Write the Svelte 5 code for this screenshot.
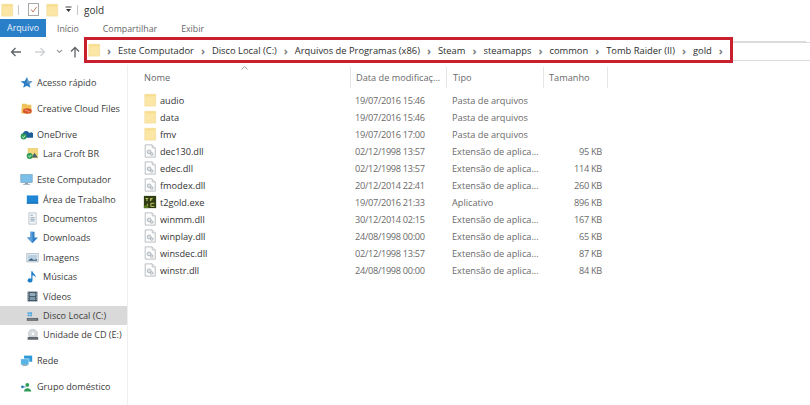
<script>
  const crumbs = ['Este Computador','Disco Local (C:)','Arquivos de Programas (x86)','Steam','steamapps','common','Tomb Raider (II)','gold'];
  const EXT = 'Extensão de aplica...';
  const files = [
    {n:'audio',d:'19/07/2016 15:46',t:'Pasta de arquivos',s:'',i:'folder'},
    {n:'data',d:'19/07/2016 15:46',t:'Pasta de arquivos',s:'',i:'folder'},
    {n:'fmv',d:'19/07/2016 17:00',t:'Pasta de arquivos',s:'',i:'folder'},
    {n:'dec130.dll',d:'02/12/1998 13:57',t:EXT,s:'95 KB',i:'dll'},
    {n:'edec.dll',d:'02/12/1998 13:57',t:EXT,s:'114 KB',i:'dll'},
    {n:'fmodex.dll',d:'20/12/2014 22:41',t:EXT,s:'260 KB',i:'dll'},
    {n:'t2gold.exe',d:'19/07/2016 21:33',t:'Aplicativo',s:'896 KB',i:'exe'},
    {n:'winmm.dll',d:'30/12/2014 02:15',t:EXT,s:'167 KB',i:'dll'},
    {n:'winplay.dll',d:'24/08/1998 00:00',t:EXT,s:'65 KB',i:'dll'},
    {n:'winsdec.dll',d:'02/12/1998 13:57',t:EXT,s:'87 KB',i:'dll'},
    {n:'winstr.dll',d:'24/08/1998 00:00',t:EXT,s:'84 KB',i:'dll'},
  ];
  const nav = [
    {g:'g1',items:[{l:'Acesso rápido',i:'star'}]},
    {g:'g2',items:[{l:'Creative Cloud Files',i:'cc'}]},
    {g:'g2',items:[{l:'OneDrive',i:'cloud'},{l:'Lara Croft BR',i:'lara',sub:1}]},
    {g:'g3',items:[{l:'Este Computador',i:'pc'},{l:'Área de Trabalho',i:'desk',sub:1},{l:'Documentos',i:'doc',sub:1},{l:'Downloads',i:'down',sub:1},{l:'Imagens',i:'img',sub:1},{l:'Músicas',i:'music',sub:1},{l:'Vídeos',i:'video',sub:1},{l:'Disco Local (C:)',i:'disk',sub:1,sel:1},{l:'Unidade de CD (E:)',i:'cd',sub:1}]},
    {g:'g3',items:[{l:'Rede',i:'net'}]},
    {g:'g4',items:[{l:'Grupo doméstico',i:'home'}]},
  ];
</script>

{#snippet icon(k, size = 16)}
  <svg class="ic" width={size} height={size} viewBox="0 0 16 16" aria-hidden="true">
    {#if k === 'folder'}
      <path d="M2 1.500h12.500V15H2z" fill="#fbe6a6" stroke="#f0d98f" stroke-width=".6"/>
      <rect x="2.400" y="1.800" width="11.600" height="2" fill="#f8dd8c"/>
    {:else if k === 'dll'}
      <path d="M2.500 1h8l3.500 3.500V15H2.500z" fill="#fdfdfd" stroke="#a9aeb4" stroke-width=".9"/>
      <path d="M10.500 1v3.500H14" fill="#e8ecef" stroke="#a9aeb4" stroke-width=".7"/>
      <circle cx="7" cy="9" r="2.200" fill="#dfe4e8" stroke="#98a2a8" stroke-width=".8"/>
      <circle cx="10" cy="11.500" r="1.600" fill="#dfe4e8" stroke="#98a2a8" stroke-width=".7"/>
    {:else if k === 'exe'}
      <rect x="1" y="1" width="14" height="14" fill="#2f3d12"/>
      <path d="M3 4h3M4.500 4v3M8.500 7V4H11M8.500 5.500h2M9 9.500h4M9 9.500V13h4M5 10v3" stroke="#c9c56a" stroke-width="1.100" fill="none"/>
      <rect x="1" y="12" width="5" height="3" fill="#5d7a22"/>
    {:else if k === 'star'}
      <path d="M8.500 1.500l2 4.600 4.800.4-3.700 3.200 1.200 4.800-4.300-2.600-4.600 2.600 1.200-4.800L.8 6.500l5-.4z" fill="#2c7fc4"/>
      <path d="M8.500 1.500l2 4.600 4.800.4-3.700 3.200-3.100-1.500z" fill="#6b9fc9"/>
    {:else if k === 'cc'}
      <path d="M2.500 2h5L9 3.500h5V14H1.500z" fill="#f0c25a"/>
      <ellipse cx="9" cy="11" rx="5.500" ry="3.400" fill="#d9542b"/>
      <path d="M6 11a1.600 1.600 0 0 1 3 0 1.600 1.600 0 0 0 3 0" stroke="#f4c9b0" stroke-width=".8" fill="none"/>
    {:else if k === 'cloud'}
      <path d="M3 12a3 3 0 0 1 .6-5.600A4.400 4.400 0 0 1 11.500 6 3.200 3.200 0 0 1 15.500 12z" fill="#1d5f96"/>
      <circle cx="4.500" cy="10.500" r="3.700" fill="#2f9d58"/>
      <path d="M2.800 10.500l1.400 1.400 2.200-2.600" stroke="#fff" stroke-width="1" fill="none"/>
    {:else if k === 'lara'}
      <rect x="2.500" y="1.500" width="12" height="12" fill="#f2d77d" stroke="#e3c56a" stroke-width=".6"/>
      <path d="M7 13l3.500-6 4 6z" fill="#44606c"/>
      <circle cx="4.500" cy="11" r="3.700" fill="#2f9d58"/>
      <path d="M2.800 11l1.400 1.400 2.200-2.600" stroke="#fff" stroke-width="1" fill="none"/>
    {:else if k === 'pc'}
      <rect x="1" y="2" width="14" height="9.500" fill="#7cc0ea" stroke="#5d8fb0" stroke-width=".7"/>
      <path d="M6 12h4v1.500h2v1H4v-1h2z" fill="#8aa2b3"/>
    {:else if k === 'desk'}
      <rect x="1" y="3" width="14" height="10" fill="#1f86d6"/>
      <rect x="1" y="12" width="14" height="1" fill="#0d5c9e"/>
    {:else if k === 'doc'}
      <path d="M3.500 1h9v14h-9z" fill="#f2f5f7" stroke="#a8b2ba" stroke-width=".8"/>
      <path d="M5.500 4h3M5.500 7h5M5.500 9h5M5.500 11h5" stroke="#7d9ab0" stroke-width="1"/>
    {:else if k === 'down'}
      <path d="M5.500 1h5v7h4.200L8 15 1.300 8h4.200z" fill="#2f7fc6"/>
      <path d="M5.500 1H8v14L1.300 8h4.200z" fill="#5c9fdb"/>
    {:else if k === 'img'}
      <rect x="1" y="3" width="14" height="10.500" fill="#e3eaef" stroke="#9fb0bc" stroke-width=".8"/>
      <rect x="2.500" y="5" width="11" height="7" fill="#b7cfe0"/>
      <path d="M2.500 12l4-3 3 2 4-1v2z" fill="#3d5e78"/>
    {:else if k === 'music'}
      <path d="M6.500 1.500H8c.4 3 4.500 3.500 3.800 8C11.400 8 10 6.600 8 6.500V13a3 2.500 0 1 1-1.500-2.200z" fill="#1e7fc9"/>
    {:else if k === 'video'}
      <rect x="2" y="2" width="12" height="12" fill="#39505f"/>
      <rect x="4.500" y="3.500" width="7" height="4" fill="#93aabb"/>
      <rect x="4.500" y="8.500" width="7" height="4" fill="#7d97a9"/>
      <path d="M3 3v10M13 3v10" stroke="#c5d2da" stroke-width="1" stroke-dasharray="1 1"/>
    {:else if k === 'disk'}
      <rect x="1" y="11" width="14" height="3.500" fill="#5b6268"/>
      <rect x="2" y="12" width="11" height="1" fill="#90989e"/>
      <path d="M2 4h2.500v2.200H2zM5 4h2.500v2.200H5zM2 6.800h2.500V9H2zM5 6.800h2.500V9H5z" fill="#4aa5dd"/>
    {:else if k === 'cd'}
      <circle cx="8.500" cy="7" r="5.500" fill="#d7dbde" stroke="#a7adb2" stroke-width=".6"/>
      <circle cx="8.500" cy="7" r="1.500" fill="#fff"/>
      <rect x="2" y="11" width="13" height="3.500" fill="#62696f"/>
    {:else if k === 'net'}
      <rect x="5" y="2" width="10" height="7.500" fill="#2e9ad8"/>
      <rect x="1" y="6" width="10" height="7.500" fill="#55b3e6" stroke="#fff" stroke-width=".6"/>
      <rect x="3" y="13" width="6" height="1.500" fill="#8296a5"/>
    {:else if k === 'home'}
      <circle cx="3" cy="8.500" r="1.700" fill="#2f7fb8"/>
      <circle cx="9" cy="6" r="2.400" fill="#2f9d58"/>
      <path d="M5 14c0-5 8-5 9 0z" fill="#2f9d58"/>
      <path d="M3 8.500h4" stroke="#2f7fb8" stroke-width="1"/>
    {/if}
  </svg>
{/snippet}

<div class="win">
  <header class="title">
    {@render icon('folder', 14)}
    <span class="sep s1"></span>
    <svg class="chk" width="12" height="14" viewBox="0 0 12 14" aria-hidden="true"><rect x=".5" y=".5" width="10" height="12" fill="#fff" stroke="#a8a8a8"/><path d="M3 6.500l2 2.500 3.500-5" stroke="#c07a62" stroke-width="1" fill="none"/></svg>
    <span class="fo">{@render icon('folder', 14)}</span>
    <svg class="qa" width="7" height="7" viewBox="0 0 7 7" aria-hidden="true"><path d="M.5 1h6" stroke="#444"/><path d="M1 3h5L3.500 6z" fill="#333"/></svg>
    <span class="sep s2"></span>
    <span class="win-name">gold</span>
  </header>

  <nav class="tabs">
    <span class="tab active">Arquivo</span>
    <span class="tab">Início</span>
    <span class="tab">Compartilhar</span>
    <span class="tab">Exibir</span>
  </nav>

  <div class="navbar">
    <div class="arrows">
      <svg width="12" height="10" viewBox="0 0 12 10" aria-hidden="true"><path d="M11 5H2M5.500 1L1.500 5l4 4" stroke="#5f6468" stroke-width="1.300" fill="none"/></svg>
      <svg class="fwd" width="12" height="10" viewBox="0 0 12 10" aria-hidden="true"><path d="M1 5h9M6.500 1l4 4-4 4" stroke="#cfd2d4" stroke-width="1.300" fill="none"/></svg>
      <svg class="drop" width="7" height="5" viewBox="0 0 7 5" aria-hidden="true"><path d="M1 1l2.500 2.500L6 1" stroke="#9a9da0" stroke-width="1.100" fill="none"/></svg>
      <svg class="up" width="10" height="12" viewBox="0 0 10 12" aria-hidden="true"><path d="M5 11.500V2M1 5.500l4-4 4 4" stroke="#5f6468" stroke-width="1.300" fill="none"/></svg>
    </div>
    <div class="address">
      <div class="crumbs">
        {@render icon('folder', 14)}
        <span class="chev">›</span>
        {#each crumbs as c}
          <span class="crumb">{c}</span><span class="chev">›</span>
        {/each}
      </div>
    </div>
  </div>

  <div class="main">
    <aside class="side">
      {#each nav as group}
        <div class={group.g}>
          {#each group.items as it}
            <div class="nav-row" class:sub={it.sub} class:sel={it.sel}>
              {@render icon(it.i, 13)}
              <span>{it.l}</span>
            </div>
          {/each}
        </div>
      {/each}
    </aside>

    <section class="list">
      <div class="sort">
        <svg width="7" height="4" viewBox="0 0 7 4" aria-hidden="true"><path d="M.5 3.500l3-3 3 3" stroke="#9aa0a5" fill="none"/></svg>
      </div>
      <div class="row head">
        <span class="c-name">Nome</span>
        <span class="c-date">Data de modificaç...</span>
        <span class="c-type">Tipo</span>
        <span class="c-size">Tamanho</span>
      </div>
      <div class="rows">
        {#each files as f}
          <div class="row">
            <span class="c-name">{@render icon(f.i, 14)}<b>{f.n}</b></span>
            <span class="c-date tight">{f.d}</span>
            <span class="c-type">{f.t}</span>
            <span class="c-size num tight">{f.s}</span>
          </div>
        {/each}
      </div>
    </section>
  </div>
</div>

<style>
  :global(body) { margin: 0; background: #fff; }
  .win {
    width: 810px; height: 405px; overflow: hidden; background: #fff;
    font-family: "Open Sans", "Noto Sans", sans-serif; font-size: 9.200px; color: #3b3b3b;
  }
  .ic { flex: none; display: block; }
  .title { height: 19px; display: flex; align-items: center; }
  .sep { width: 1px; height: 10px; background: #c4c4c4; }
  .s1 { margin-left: 4px; }
  .chk { margin-left: 9px; }
  .fo { margin-left: 5px; }
  .qa { margin-left: 6px; }
  .s2 { margin-left: 5px; }
  .win-name { font-size: 10px; color: #333; margin-left: 6px; }

  .tabs { height: 19px; display: flex; align-items: stretch; font-size: 8.800px; color: #666; }
  .tab { display: flex; align-items: center; }
  .tab:nth-child(2) { margin-left: 11px; }
  .tab:nth-child(3) { margin-left: 24px; }
  .tab:nth-child(4) { margin-left: 24px; }
  .active { width: 46px; justify-content: center; background: #2a7fc9; color: #e8f2fa; height: 18px; }

  .navbar { height: 27px; display: flex; }
  .arrows { width: 85px; display: flex; align-items: center; padding: 0 0 0 10px; box-sizing: border-box; }
  .fwd { margin-left: 12px; }
  .drop { margin-left: 10px; }
  .up { margin-left: 7px; }
  .address {
    flex: 1; height: 17px; margin-top: 4px;
    border-top: 1px solid #dcdcdc; border-bottom: 1px solid #dcdcdc; position: relative;
    box-shadow: 0 -5px 0 -4px #dcdcdc;
  }
  .crumbs {
    position: absolute; left: -1px; top: -6px; width: 649px; height: 26px; box-sizing: border-box;
    border: 3.500px solid #c8202e; display: flex; align-items: center;
    font-size: 9.350px; color: #2d2d2d; background: #fff;
  }
  .chev { width: 18px; text-align: center; color: #7d7d7d; font-size: 11px; font-weight: 700; line-height: 1; flex: none; }
  .crumbs > :global(svg) { margin-right: -1px; }
  .crumb { white-space: nowrap; }

  .main { display: flex; height: 340px; }
  .side { width: 128px; flex: none; box-sizing: border-box; border-right: 1px solid #efefef; padding-top: 8px; }
  .nav-row { height: 19.400px; display: flex; align-items: center; gap: 4px; padding-left: 20px; white-space: nowrap; font-size: 9.100px; }
  .nav-row.sub { padding-left: 26px; }
  .sel { background: #d9d9d9; }
  .g2 { margin-top: 6.500px; }
  .g3 { margin-top: 6.500px; }
  .g4 { margin-top: 6.500px; }

  .list { flex: 1; position: relative; }
  .sort { position: absolute; left: 113px; top: 1px; height: 4px; line-height: 0; }
  .row { display: flex; height: 17px; align-items: center; white-space: nowrap; }
  .head { height: 21px; margin-top: 2px; color: #666; }
  .head span { height: 21px; display: flex; align-items: center; box-sizing: border-box; }
  .head .c-date, .head .c-type, .head .c-size { border-left: 1px solid #e6e6e6; }
  .head .c-size { border-right: 1px solid #e6e6e6; }
  .rows { margin-top: 3.500px; }
  .c-name { width: 222px; padding-left: 15px; box-sizing: border-box; flex: none; display: flex; align-items: center; gap: 3px; }
  .head .c-name { padding-left: 16px; }
  .c-name b { font-weight: 400; color: #333; }
  .c-date { width: 96px; padding-left: 5px; box-sizing: border-box; flex: none; color: #6a6a6a; }
  .c-type { width: 97px; padding-left: 6px; box-sizing: border-box; flex: none; color: #6a6a6a; }
  .c-size { width: 65px; padding-left: 5px; box-sizing: border-box; flex: none; color: #6a6a6a; }
  .num { padding: 0 6px 0 0; text-align: right; }
  .tight { letter-spacing: -.3px; }
</style>
